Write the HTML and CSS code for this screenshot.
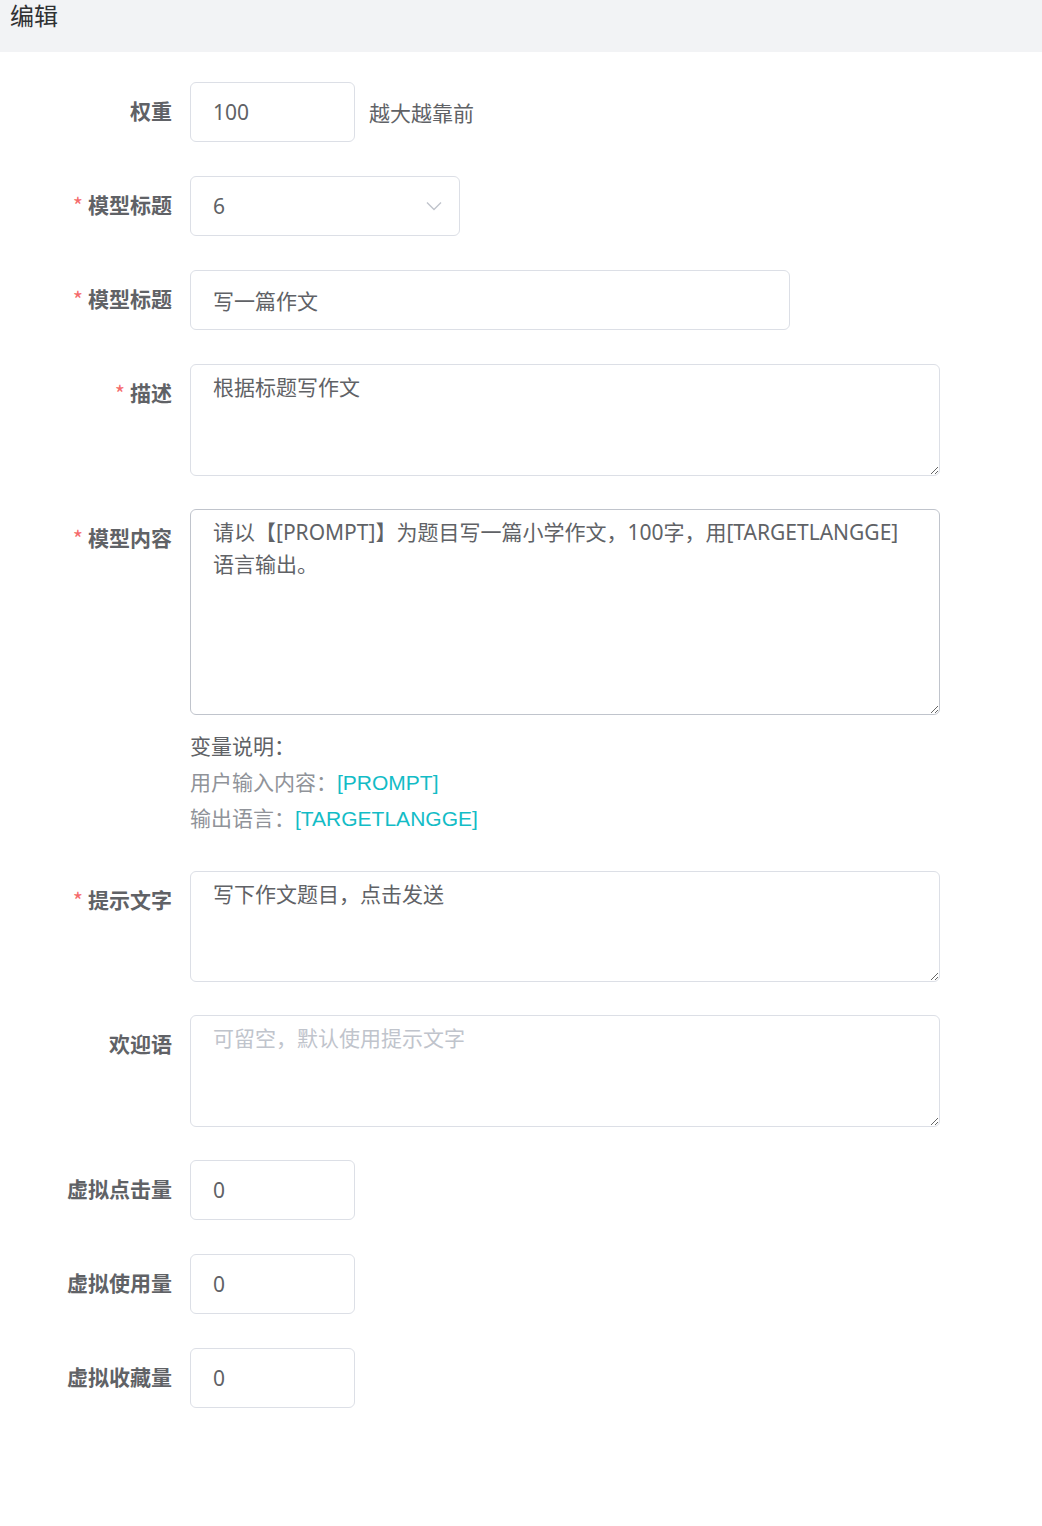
FILE: index.html
```html
<!DOCTYPE html>
<html lang="zh-CN">
<head>
    <meta charset="UTF-8">
    <meta name="viewport" content="width=device-width, initial-scale=1.0">
    <title>编辑</title>
    <link rel="stylesheet" href="styles.css">
</head>
<body>
    <header class="page-header">编辑</header>

    <form class="edit-form">
        <div class="form-row">
            <label class="form-label">权重</label>
            <div class="form-field">
                <input type="text" class="form-input input-small" value="100">
                <span class="form-hint">越大越靠前</span>
            </div>
        </div>

        <div class="form-row">
            <label class="form-label"><span class="req">*</span>模型标题</label>
            <div class="form-field">
                <div class="select-box">
                    <input type="text" class="form-input input-select" value="6" readonly>
                    <svg class="select-arrow" width="16" height="10" viewBox="0 0 16 10">
                        <path d="M1 1.5 L8 8.5 L15 1.5" fill="none" stroke="#c0c4cc" stroke-width="1.4"/>
                    </svg>
                </div>
            </div>
        </div>

        <div class="form-row">
            <label class="form-label"><span class="req">*</span>模型标题</label>
            <div class="form-field">
                <input type="text" class="form-input input-medium" value="写一篇作文">
            </div>
        </div>

        <div class="form-row row-area">
            <label class="form-label"><span class="req">*</span>描述</label>
            <div class="form-field">
                <textarea class="form-textarea area-short">根据标题写作文</textarea>
            </div>
        </div>

        <div class="form-row">
            <label class="form-label"><span class="req">*</span>模型内容</label>
            <div class="form-field field-column">
                <textarea class="form-textarea area-tall">请以【[PROMPT]】为题目写一篇小学作文，100字，用[TARGETLANGGE]语言输出。</textarea>
                <div class="var-notes">
                    <div class="var-title">变量说明：</div>
                    <div>用户输入内容：<span class="var-key">[PROMPT]</span></div>
                    <div>输出语言：<span class="var-key">[TARGETLANGGE]</span></div>
                </div>
            </div>
        </div>

        <div class="form-row row-area">
            <label class="form-label"><span class="req">*</span>提示文字</label>
            <div class="form-field">
                <textarea class="form-textarea area-short area-hint">写下作文题目，点击发送</textarea>
            </div>
        </div>

        <div class="form-row row-area">
            <label class="form-label">欢迎语</label>
            <div class="form-field">
                <textarea class="form-textarea area-short" placeholder="可留空，默认使用提示文字"></textarea>
            </div>
        </div>

        <div class="form-row">
            <label class="form-label">虚拟点击量</label>
            <div class="form-field">
                <input type="text" class="form-input input-small" value="0">
            </div>
        </div>

        <div class="form-row">
            <label class="form-label">虚拟使用量</label>
            <div class="form-field">
                <input type="text" class="form-input input-small" value="0">
            </div>
        </div>

        <div class="form-row">
            <label class="form-label">虚拟收藏量</label>
            <div class="form-field">
                <input type="text" class="form-input input-small" value="0">
            </div>
        </div>
    </form>
</body>
</html>
```

FILE: styles.css
```css
body {
    margin: 0;
    background: #fff;
    color: #606266;
    font-family: "Noto Sans", "Noto Sans CJK SC", sans-serif;
}

.page-header {
    height: 52px;
    padding: 0 10px;
    background: #f2f3f5;
    color: #303133;
    font-size: 24px;
    line-height: 32px;
    box-sizing: border-box;
}

.edit-form {
    padding-top: 30px;
}

.form-row {
    display: flex;
    align-items: flex-start;
    margin-bottom: 34px;
}

.form-row.row-area {
    margin-bottom: 33px;
}

.form-label {
    width: 190px;
    height: 60px;
    flex-shrink: 0;
    box-sizing: border-box;
    padding-right: 18px;
    text-align: right;
    font-family: "Noto Sans CJK SC", sans-serif;
    font-size: 21px;
    font-weight: bold;
    line-height: 57px;
    color: #606266;
    white-space: nowrap;
}

.req {
    color: #f56c6c;
    font-weight: normal;
    font-size: 22px;
    line-height: 1;
    margin-right: 5px;
    vertical-align: top;
    position: relative;
    top: 17px;
}

.form-field {
    display: flex;
    align-items: center;
}

.field-column {
    flex-direction: column;
    align-items: flex-start;
}

.form-input {
    display: block;
    height: 60px;
    box-sizing: border-box;
    border: 1px solid #dcdfe6;
    border-radius: 6px;
    padding: 0 22px 1px;
    font-family: "Noto Sans", "Noto Sans CJK SC", sans-serif;
    font-size: 21px;
    color: #606266;
    outline: none;
    background: #fff;
    margin: 0;
}

.input-small {
    width: 165px;
}

.input-medium {
    width: 600px;
}

.input-select {
    width: 270px;
    cursor: pointer;
}

.select-box {
    position: relative;
}

.select-arrow {
    position: absolute;
    right: 18px;
    top: 25px;
}

.form-hint {
    margin-left: 14px;
    font-family: "Noto Sans CJK SC", sans-serif;
    font-size: 21px;
    color: #606266;
}

.form-textarea {
    display: block;
    width: 750px;
    box-sizing: border-box;
    border: 1px solid #dcdfe6;
    border-radius: 6px;
    padding: 6px 22px;
    font-family: "Noto Sans", "Noto Sans CJK SC", sans-serif;
    font-size: 21px;
    line-height: 32px;
    color: #606266;
    resize: vertical;
    outline: none;
    margin: 0;
}

.form-textarea::placeholder {
    color: #c0c4cc;
}

.area-short {
    height: 112px;
}

.area-hint {
    height: 111px;
}

.area-tall {
    height: 206px;
    border-color: #c0c4cc;
}

.var-notes {
    margin-top: 14px;
    font-family: "Liberation Sans", "Noto Sans CJK SC", sans-serif;
    font-size: 21px;
    line-height: 36px;
    color: #909399;
}

.var-title {
    color: #606266;
}

.var-key {
    color: #13bcc6;
}
```
